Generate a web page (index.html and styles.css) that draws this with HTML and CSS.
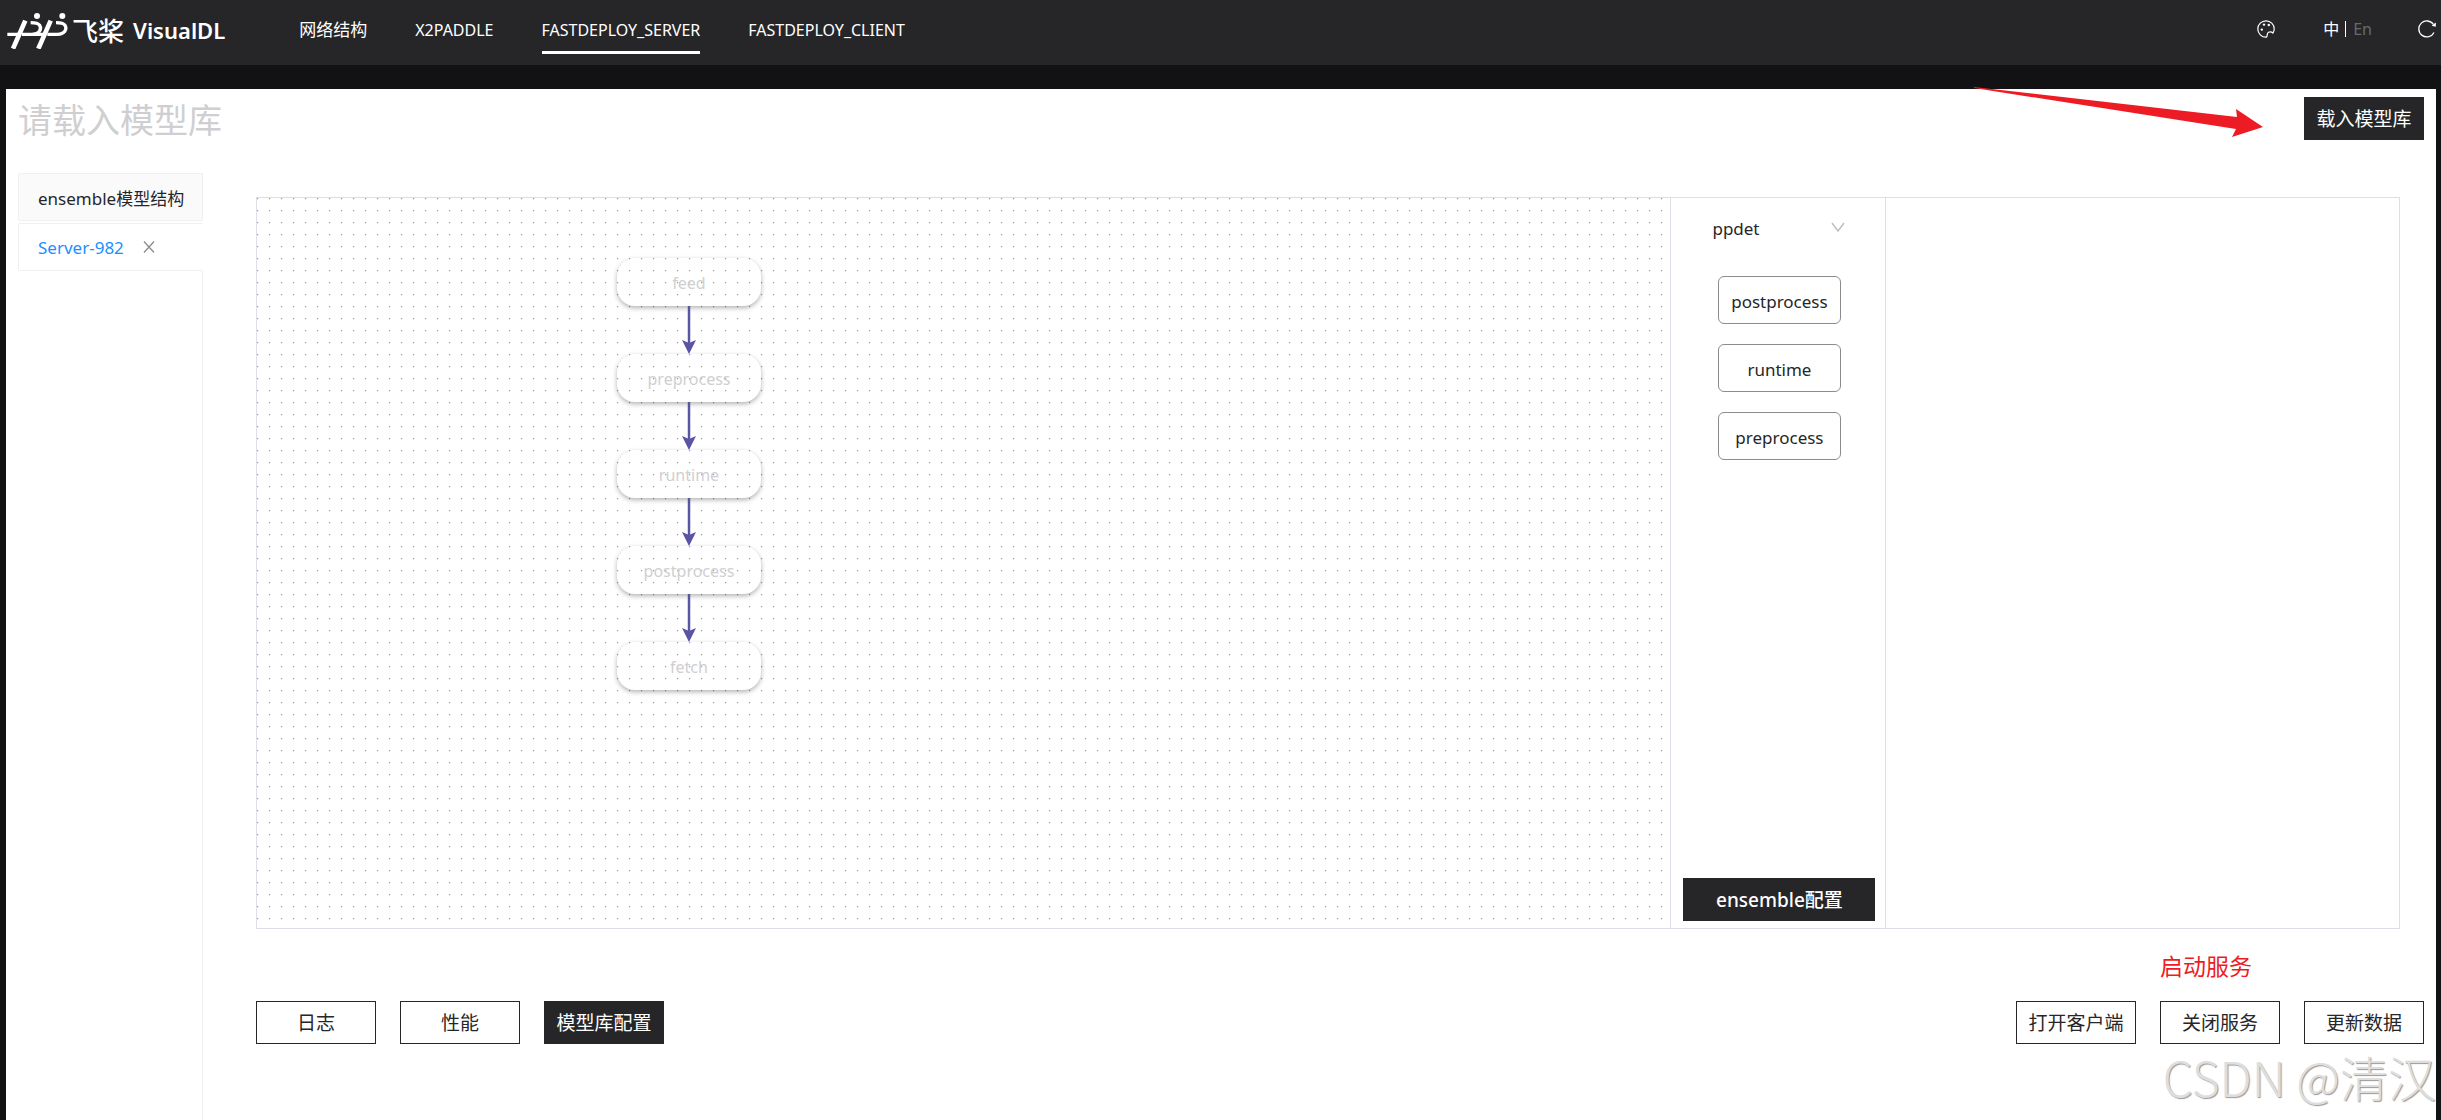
FILE: index.html
```html
<!DOCTYPE html>
<html lang="zh-CN">
<head>
<meta charset="utf-8">
<title>VisualDL</title>
<link rel="stylesheet" href="styles.css">
</head>
<body>
<header class="topbar">
  <a class="brand" href="#">
    <svg class="brand-mark" viewBox="18 34 186 111" aria-hidden="true">
      <g fill="none" stroke="#fff">
        <path stroke-width="14" d="M39 144 L76 60"/>
        <path stroke-width="10" d="M22 101 H54 M66 101 H96 C118 100 126 86 119 74 C114 67 106 66 92 66"/>
        <path stroke-width="14" d="M115 144 L152 60"/>
        <path stroke-width="10" d="M98 101 H130 M142 101 H172 C194 100 202 86 195 74 C190 67 182 66 168 66"/>
      </g>
      <circle cx="111" cy="46" r="9" fill="#fff"/>
      <circle cx="187" cy="46" r="9" fill="#fff"/>
    </svg>
    <span class="brand-cn">飞桨</span>
    <span class="brand-name">VisualDL</span>
  </a>
  <nav class="nav">
    <a class="nav-cn" href="#">网络结构</a>
    <a href="#">X2PADDLE</a>
    <a class="active" href="#">FASTDEPLOY_SERVER</a>
    <a href="#">FASTDEPLOY_CLIENT</a>
  </nav>
  <div class="tools">
    <button class="icon-btn" aria-label="主题">
      <svg width="18" height="18" viewBox="0 0 18 18" fill="none" stroke="#fff" stroke-width="1.2">
        <path d="M9.5 17.2 C4.5 17.4 .8 13.5 .8 9 C.8 4.4 4.5 .8 9 .8 C13.5 .8 17.2 4.4 17.2 9 C17.2 10.6 16.8 12 15.9 13 C14.5 11.4 11.5 11.4 10.6 13.2 C10 14.5 10.5 15.8 9.5 17.2 Z"/>
        <g fill="#fff" stroke="none"><circle cx="7" cy="4.6" r="1.2"/><circle cx="11.8" cy="5" r="1.2"/><circle cx="4.8" cy="9.6" r="1.2"/></g>
      </svg>
    </button>
    <div class="lang"><button class="lang-btn on">中</button><button class="lang-btn">En</button></div>
    <button class="icon-btn" aria-label="刷新">
      <svg width="18" height="18" viewBox="0 0 18 18" fill="none" stroke="#fff" stroke-width="1.3">
        <path d="M16 12.5 A8 8 0 1 1 15.5 4.5"/><path d="M17.8 2.5 V6.8 L13.6 5.8 Z" fill="#fff" stroke="none"/>
      </svg>
    </button>
  </div>
</header>

<main class="page">
  <div class="page-head">
    <h1>请载入模型库</h1>
    <button class="btn btn-dark">载入模型库</button>
    <svg class="pointer" viewBox="0 0 290 52" aria-hidden="true">
      <path d="M0 1 L263 31 L262 23 L289 41 L258 51 L262 43 L0 2 Z" fill="#ed1c24"/>
    </svg>
  </div>

  <div class="body">
    <aside class="tabs" role="tablist">
      <button class="tab" role="tab">ensemble模型结构</button>
      <button class="tab current" role="tab" aria-selected="true">Server-982
        <svg width="12" height="12" viewBox="0 0 12 12" fill="none" stroke="#8c8c8c" stroke-width="1.3"><path d="M1 .5 L11 11.5 M11 .5 L1 11.5"/></svg>
      </button>
      <div class="tabs-line"></div>
    </aside>

    <section class="content">
      <div class="workspace">
        <div class="graph">
          <div class="node">feed</div>
          <svg class="link" viewBox="0 0 14 48"><path d="M7 0 V38"/><path class="tip" d="M0 34 L7 37 L14 34 L7 48 Z"/></svg>
          <div class="node">preprocess</div>
          <svg class="link" viewBox="0 0 14 48"><path d="M7 0 V38"/><path class="tip" d="M0 34 L7 37 L14 34 L7 48 Z"/></svg>
          <div class="node">runtime</div>
          <svg class="link" viewBox="0 0 14 48"><path d="M7 0 V38"/><path class="tip" d="M0 34 L7 37 L14 34 L7 48 Z"/></svg>
          <div class="node">postprocess</div>
          <svg class="link" viewBox="0 0 14 48"><path d="M7 0 V38"/><path class="tip" d="M0 34 L7 37 L14 34 L7 48 Z"/></svg>
          <div class="node">fetch</div>
        </div>
        <div class="models">
          <div class="model-select">
            <select aria-label="模型"><option>ppdet</option></select>
            <svg width="14" height="10" viewBox="0 0 14 10" fill="none" stroke="#bfbfbf" stroke-width="1.5"><path d="M1 1 L7 9 L13 1"/></svg>
          </div>
          <div class="model-list">
            <button class="model">postprocess</button>
            <button class="model">runtime</button>
            <button class="model">preprocess</button>
          </div>
          <button class="btn btn-dark btn-wide">ensemble配置</button>
        </div>
        <div class="detail"></div>
      </div>

      <p class="note">启动服务</p>
      <div class="actions">
        <button class="btn">日志</button>
        <button class="btn">性能</button>
        <button class="btn btn-dark">模型库配置</button>
        <button class="btn push">打开客户端</button>
        <button class="btn">关闭服务</button>
        <button class="btn">更新数据</button>
      </div>
    </section>
  </div>
  <div class="watermark">CSDN @清汉</div>
</main>
</body>
</html>
```
FILE: styles.css
```css
* { box-sizing: border-box; }
body {
  margin: 0;
  min-height: 100vh;
  display: flex;
  flex-direction: column;
  background: #121214;
  color: #262629;
  font-family: "Noto Sans", "Noto Sans CJK SC", sans-serif;
  font-size: 17px;
}
button, select { font: inherit; color: inherit; background: none; border: 0; padding: 0; margin: 0; }
a { color: inherit; text-decoration: none; }
svg { display: block; flex: none; }

.topbar {
  height: 65px;
  padding: 0 5px 0 6px;
  display: flex;
  align-items: flex-start;
  background: #262629;
  color: #fff;
}
.brand { display: flex; align-items: center; height: 60px; }
.brand-mark { width: 62px; height: 37px; }
.brand-cn { margin-left: 4px; font: 500 26px/36px "Noto Sans CJK SC", sans-serif; }
.brand-name { margin-left: 9px; font-size: 22px; font-weight: 600; line-height: 36px; }
.nav { display: flex; gap: 48px; margin-left: 74px; font-size: 16px; }
.nav a { height: 54px; line-height: 60px; border-bottom: 3px solid transparent; }
.nav .nav-cn { font-size: 17px; }
.nav a.active { border-color: #fff; }
.tools { margin-left: auto; display: flex; align-items: center; height: 58px; }
.lang { display: flex; align-items: center; margin: 0 46px 0 48px; font-size: 16px; }
.lang-btn { line-height: 16px; color: #69696c; padding-left: 7px; }
.lang-btn.on { color: #fff; padding: 0 6px 0 0; border-right: 1px solid #fff; }

.page {
  position: relative;
  flex: 1;
  display: flex;
  flex-direction: column;
  margin: 24px 5px 0 6px;
  padding: 0 12px;
  background: #fff;
}
.page-head {
  position: relative;
  display: flex;
  justify-content: space-between;
  align-items: flex-start;
  padding-top: 8px;
  height: 84px;
}
h1 { margin: 0; font-size: 34px; font-weight: 400; line-height: 46px; color: #cfcfd1; }
.pointer { position: absolute; width: 290px; right: 160px; top: -3px; }

.btn {
  width: 120px;
  height: 43px;
  border: 1px solid #262629;
  background: #fff;
  font-size: 19px;
  line-height: 28px;
  white-space: nowrap;
}
.btn-dark { background: #262629; color: #fff; }
.btn-wide { width: 192px; font-weight: 500; }

.body { flex: 1; display: flex; gap: 53px; }
.tabs { flex: none; width: 185px; display: flex; flex-direction: column; }
.tab {
  display: flex;
  align-items: center;
  gap: 19px;
  height: 48px;
  padding: 0 19px;
  margin-bottom: 2px;
  border: 1px solid #f0f0f0;
  border-radius: 2px 0 0 2px;
  background: #fafafa;
  white-space: nowrap;
}
.tab.current { margin: 0; background: #fff; color: #1890ff; border-right-color: #fff; }
.tabs-line { flex: 1; border-right: 1px solid #f0f0f0; }

.content { flex: 1; min-width: 0; padding-top: 24px; }
.workspace {
  display: grid;
  grid-template-columns: minmax(0, 1fr) 216px 24%;
  min-height: 732px;
  margin-right: 24px;
  border: 1px solid #dcdfe6;
}
.graph {
  display: flex;
  flex-direction: column;
  align-items: flex-start;
  padding: 60px 0 0 360px;
  background: radial-gradient(circle at 0 0, #999 1px, #e8e8e8 1px 2px, transparent 2px) 0 0 / 12px 12px;
}
.node {
  width: 144px;
  height: 48px;
  border-radius: 18px;
  box-shadow: 0 2px 5px rgba(0, 0, 0, .3);
  color: #cfcfd1;
  font-size: 16px;
  line-height: 50px;
  text-align: center;
}
.link { width: 14px; height: 48px; margin-left: 65px; fill: none; stroke: #5954a4; stroke-width: 2.5; }
.link .tip { fill: #5954a4; stroke: none; }

.models {
  display: flex;
  flex-direction: column;
  align-items: center;
  padding: 10px 0 7px 3px;
  margin: 0 -1px 0 1px;
  border: solid #dcdfe6;
  border-width: 0 1px;
}
.model-select { position: relative; width: 160px; }
.model-select select { appearance: none; width: 100%; height: 40px; padding-left: 13px; }
.model-select svg { position: absolute; right: 14px; top: 14px; pointer-events: none; }
.model-list { display: flex; flex-direction: column; gap: 20px; margin: 28px 0 auto; }
.model { width: 123px; height: 48px; border: 1px solid #8c8c8e; border-radius: 6px; padding-top: 2px; }

.note { margin: 21px 24px 0 0; padding-right: 148px; font-size: 23px; line-height: 32px; text-align: right; color: #ed1c24; }
.actions { display: flex; gap: 24px; margin-top: 19px; }
.push { margin-left: auto; }
.watermark {
  position: absolute;
  right: 0;
  bottom: 14px;
  font: 300 48px/60px "Noto Sans CJK SC", sans-serif;
  color: #dedede;
  text-shadow: 1px 1px 1px #999;
  white-space: nowrap;
}
```
